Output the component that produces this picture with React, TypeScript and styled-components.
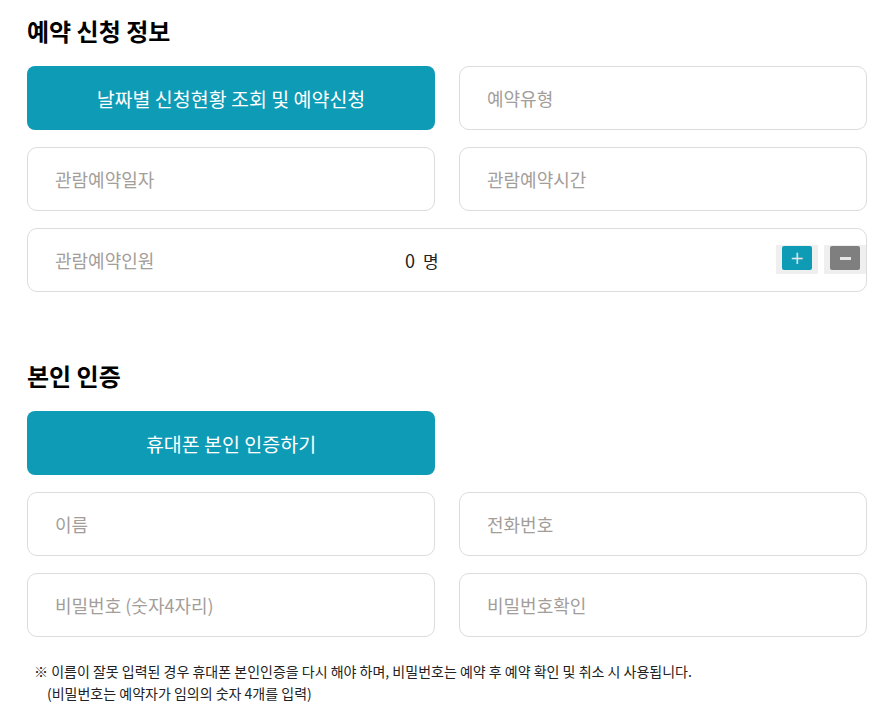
import React, { useState } from "react";
import styled, { createGlobalStyle } from "styled-components";

const GlobalStyle = createGlobalStyle`
  body {
    margin: 0;
    background: #ffffff;
    font-family: "Noto Sans CJK KR", "Noto Sans", sans-serif;
    color: #111;
  }
  * { box-sizing: border-box; }
`;

const App: React.FC = () => {
  const [count, setCount] = useState(0);

  return (
    <>
      <GlobalStyle />
      <Page>
        <Section>
          <Title>예약 신청 정보</Title>
          <Grid>
            <PrimaryButton>날짜별 신청현황 조회 및 예약신청</PrimaryButton>
            <Field placeholder="예약유형" />
            <Field placeholder="관람예약일자" />
            <Field placeholder="관람예약시간" />
            <CountRow>
              <CountLabel>관람예약인원</CountLabel>
              <CountValue>
                {count} <span>명</span>
              </CountValue>
              <Steppers>
                <StepWrap>
                  <StepButton $variant="plus" onClick={() => setCount(count + 1)}>
                    +
                  </StepButton>
                </StepWrap>
                <StepWrap>
                  <StepButton
                    $variant="minus"
                    onClick={() => setCount(Math.max(0, count - 1))}
                  >
                    <MinusBar />
                  </StepButton>
                </StepWrap>
              </Steppers>
            </CountRow>
          </Grid>
        </Section>

        <Section $spaced>
          <Title>본인 인증</Title>
          <Grid>
            <PrimaryButton>휴대폰 본인 인증하기</PrimaryButton>
            <div />
            <Field placeholder="이름" />
            <Field placeholder="전화번호" />
            <Field placeholder="비밀번호 (숫자4자리)" />
            <Field placeholder="비밀번호확인" />
          </Grid>
          <Notice>
            <p>※ 이름이 잘못 입력된 경우 휴대폰 본인인증을 다시 해야 하며, 비밀번호는 예약 후 예약 확인 및 취소 시 사용됩니다.</p>
            <p className="sub">(비밀번호는 예약자가 임의의 숫자 4개를 입력)</p>
          </Notice>
        </Section>
      </Page>
    </>
  );
};

const Page = styled.div`
  width: 886px;
  padding: 14px 20px 20px 27px;
`;

const Section = styled.section<{ $spaced?: boolean }>`
  margin-top: ${p => (p.$spaced ? "67px" : "0")};
`;

const Title = styled.h2`
  margin: 0 0 18px;
  font-size: 24px;
  font-weight: 700;
  line-height: 34px;
  color: #000;
`;

const Grid = styled.div`
  display: grid;
  grid-template-columns: 408px 408px;
  column-gap: 24px;
  row-gap: 17px;
`;

const PrimaryButton = styled.button`
  height: 64px;
  border: none;
  border-radius: 8px;
  background: #0e9bb6;
  color: #ffffff;
  font-family: inherit;
  font-size: 19.5px;
  cursor: pointer;
`;

const Field = styled.input`
  height: 64px;
  width: 100%;
  padding: 0 27px;
  border: 1px solid #dcdcdc;
  border-radius: 10px;
  font-family: inherit;
  font-size: 18px;
  color: #333;
  outline: none;
  &::placeholder {
    color: #a39e9a;
  }
`;

const CountRow = styled.div`
  grid-column: 1 / span 2;
  height: 64px;
  display: flex;
  align-items: center;
  padding: 0 0 0 27px;
  border: 1px solid #dcdcdc;
  border-radius: 10px;
  overflow: hidden;
`;

const CountLabel = styled.span`
  width: 350px;
  font-size: 18px;
  color: #a39e9a;
`;

const CountValue = styled.span`
  font-size: 18px;
  color: #222;
  span {
    margin-left: 4px;
    font-size: 17px;
  }
`;

const Steppers = styled.div`
  margin-left: auto;
  display: flex;
  gap: 6px;
  align-self: flex-start;
  margin-top: 16px;
`;

const StepWrap = styled.div`
  width: 42px;
  height: 29px;
  padding: 1px 6px 4px;
  background: #efefef;
`;

const StepButton = styled.button<{ $variant: "plus" | "minus" }>`
  width: 30px;
  height: 24px;
  padding: 0;
  border: none;
  border-radius: 2px;
  background: ${p => (p.$variant === "plus" ? "#0e9bb6" : "#7f7f7f")};
  color: #e6e6e6;
  font-family: "DejaVu Sans", sans-serif;
  font-size: 17px;
  line-height: 24px;
  display: flex;
  align-items: center;
  justify-content: center;
  cursor: pointer;
`;

const MinusBar = styled.span`
  display: block;
  width: 11px;
  height: 3px;
  background: #e6e6e6;
`;

const Notice = styled.div`
  margin-top: 23px;
  padding-left: 7px;
  font-size: 14px;
  color: #222;
  line-height: 22px;
  p {
    margin: 0;
  }
  .sub {
    padding-left: 13px;
  }
`;

export default App;
